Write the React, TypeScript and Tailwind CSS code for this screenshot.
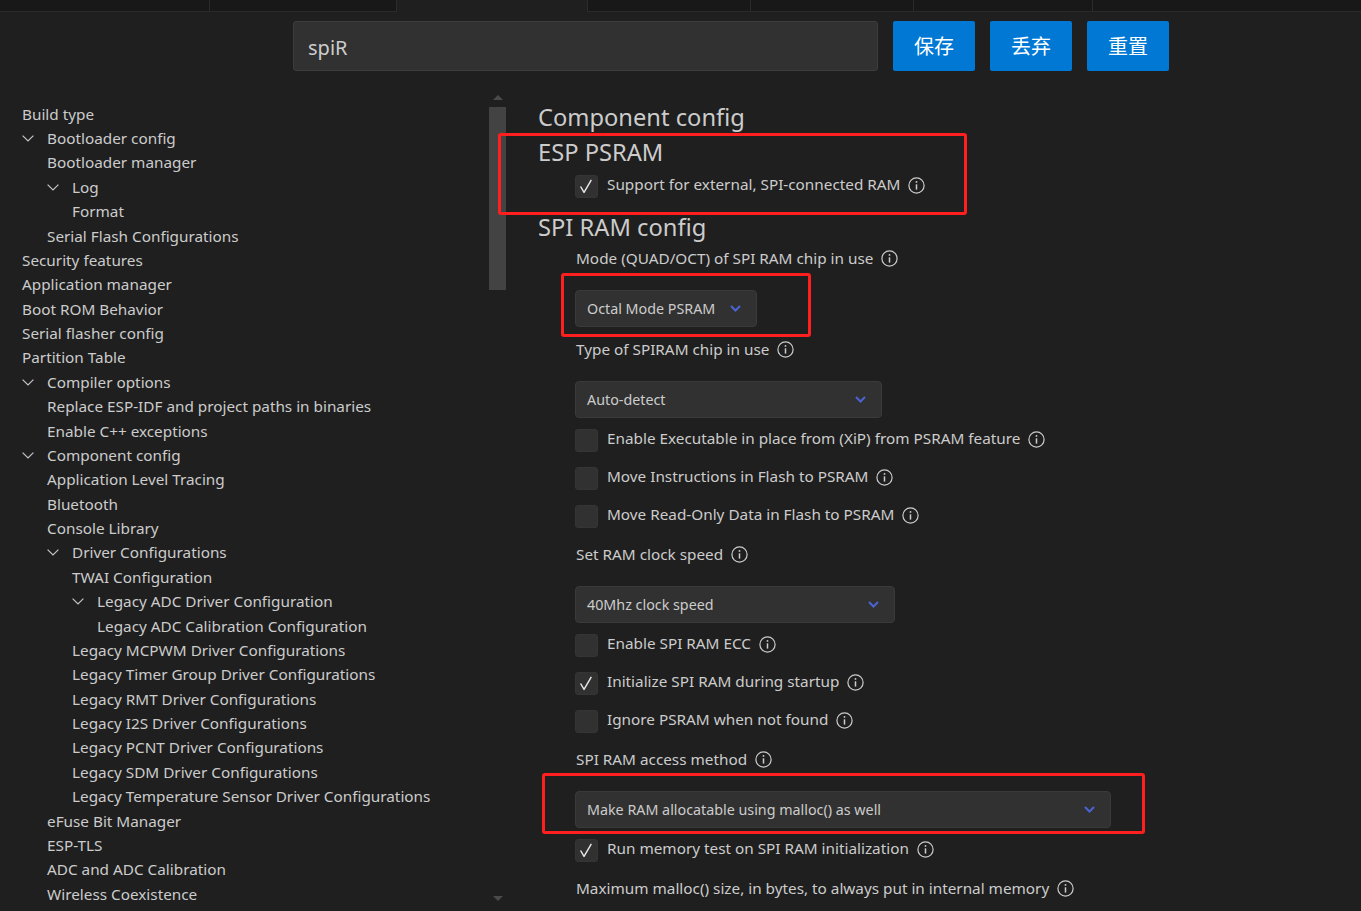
import React from "react";

const FONT = "font-['Noto_Sans','Noto_Sans_CJK_SC',sans-serif]";

type Item = { t: string; pad: number; chev?: boolean };

const tree: Item[] = [
  { t: "Build type", pad: 0 },
  { t: "Bootloader config", pad: 0, chev: true },
  { t: "Bootloader manager", pad: 1 },
  { t: "Log", pad: 1, chev: true },
  { t: "Format", pad: 2 },
  { t: "Serial Flash Configurations", pad: 1 },
  { t: "Security features", pad: 0 },
  { t: "Application manager", pad: 0 },
  { t: "Boot ROM Behavior", pad: 0 },
  { t: "Serial flasher config", pad: 0 },
  { t: "Partition Table", pad: 0 },
  { t: "Compiler options", pad: 0, chev: true },
  { t: "Replace ESP-IDF and project paths in binaries", pad: 1 },
  { t: "Enable C++ exceptions", pad: 1 },
  { t: "Component config", pad: 0, chev: true },
  { t: "Application Level Tracing", pad: 1 },
  { t: "Bluetooth", pad: 1 },
  { t: "Console Library", pad: 1 },
  { t: "Driver Configurations", pad: 1, chev: true },
  { t: "TWAI Configuration", pad: 2 },
  { t: "Legacy ADC Driver Configuration", pad: 2, chev: true },
  { t: "Legacy ADC Calibration Configuration", pad: 3 },
  { t: "Legacy MCPWM Driver Configurations", pad: 2 },
  { t: "Legacy Timer Group Driver Configurations", pad: 2 },
  { t: "Legacy RMT Driver Configurations", pad: 2 },
  { t: "Legacy I2S Driver Configurations", pad: 2 },
  { t: "Legacy PCNT Driver Configurations", pad: 2 },
  { t: "Legacy SDM Driver Configurations", pad: 2 },
  { t: "Legacy Temperature Sensor Driver Configurations", pad: 2 },
  { t: "eFuse Bit Manager", pad: 1 },
  { t: "ESP-TLS", pad: 1 },
  { t: "ADC and ADC Calibration", pad: 1 },
  { t: "Wireless Coexistence", pad: 1 },
];

const padCls = ["pl-[22px]", "pl-[47px]", "pl-[72px]", "pl-[97px]"];

function TreeChevron() {
  return (
    <svg width="12" height="7" viewBox="0 0 12 7" className="block">
      <polyline points="0.6,0.6 6,6 11.4,0.6" fill="none" stroke="#c5c5c5" strokeWidth="1.2" />
    </svg>
  );
}

function InfoIcon() {
  return (
    <svg width="17" height="17" viewBox="0 0 17 17" className="block shrink-0">
      <circle cx="8.5" cy="8.5" r="7.6" fill="none" stroke="#cccccc" strokeWidth="1.2" />
      <line x1="8.5" y1="7.3" x2="8.5" y2="12.6" stroke="#cccccc" strokeWidth="1.5" />
      <circle cx="8.5" cy="4.9" r="0.95" fill="#cccccc" />
    </svg>
  );
}

function Check({ on }: { on?: boolean }) {
  return (
    <div className="w-[23px] h-[23px] rounded-[3px] bg-[#313131] border border-[#353535] shrink-0 flex items-center justify-center">
      {on && (
        <svg width="23" height="23" viewBox="0 0 23 23" className="block">
          <polyline points="5,11.5 8.8,18 16.8,4.2" fill="none" stroke="#e6e6e6" strokeWidth="1.6" strokeLinejoin="round" />
        </svg>
      )}
    </div>
  );
}

function CheckRow({ label, on }: { label: string; on?: boolean }) {
  return (
    <div className="h-[38px] flex items-center pl-[37px]">
      <Check on={on} />
      <span className="ml-[9px] mb-[3px] text-[15.3px] text-[#cccccc] whitespace-nowrap">{label}</span>
      <span className="ml-[8px] mb-[2px]">
        <InfoIcon />
      </span>
    </div>
  );
}

function Label({ label }: { label: string }) {
  return (
    <div className="h-[38px] flex items-center pl-[38px]">
      <span className="text-[15.3px] text-[#cccccc] whitespace-nowrap">{label}</span>
      <span className="ml-[8px]">
        <InfoIcon />
      </span>
    </div>
  );
}

function Select({ value, w }: { value: string; w: string }) {
  return (
    <div className="pl-[37px] mt-[13px] mb-[3px]">
      <div className={`${w} h-[37px] rounded-[4px] bg-[#313131] border border-[#3a3a3a] flex items-center justify-between pl-[11px] pr-[15px]`}>
        <span className="text-[14.3px] text-[#cccccc] whitespace-nowrap">{value}</span>
        <svg width="11" height="7" viewBox="0 0 11 7" className="block">
          <polyline points="1,1 5.5,5.5 10,1" fill="none" stroke="#4b63d4" strokeWidth="2" />
        </svg>
      </div>
    </div>
  );
}

function LabelSelect({ label, value, w }: { label: string; value: string; w: string }) {
  return (
    <div>
      <Label label={label} />
      <Select value={value} w={w} />
    </div>
  );
}

export default function App() {
  const tabs = [
    { w: "w-[209px]", active: false },
    { w: "w-[187px]", active: false },
    { w: "w-[191px]", active: true },
    { w: "w-[163px]", active: false },
    { w: "w-[163px]", active: false },
    { w: "w-[179px]", active: false },
    { w: "flex-1", active: false },
  ];
  return (
    <div className={`relative w-[1361px] h-[911px] overflow-hidden bg-[#1f1f1f] ${FONT}`}>
      {/* tab strip */}
      <div className="flex h-[12px]">
        {tabs.map((t, i) => (
          <div
            key={i}
            className={
              t.active
                ? `${t.w} h-[12px] bg-[#1f1f1f] border-l border-[#2b2b2b]`
                : `${t.w} h-[12px] bg-[#181818] border-b border-[#2b2b2b] ${i > 0 ? "border-l" : ""}`
            }
          />
        ))}
      </div>

      {/* toolbar */}
      <div className="flex items-center pl-[293px] pt-[9px] gap-[15px]">
        <div className="w-[585px] h-[50px] rounded-[3px] bg-[#313131] border border-[#3c3c3c] flex items-center pl-[14px] pt-[3px]">
          <span className="text-[20px] text-[#cccccc]">spiR</span>
        </div>
        {["保存", "丢弃", "重置"].map((b) => (
          <div key={b} className="w-[82px] h-[50px] rounded-[2px] bg-[#0078d4] flex items-center justify-center">
            <span className="text-[20px] text-white font-['Noto_Sans_CJK_SC',sans-serif]">{b}</span>
          </div>
        ))}
      </div>

      {/* main */}
      <div className="flex mt-[19px] h-[821px]">
        {/* sidebar */}
        <div className="w-[489px] pt-[12px]">
          {tree.map((it, i) => (
            <div key={i} className={`h-[24.375px] flex items-center ${padCls[it.pad]}`}>
              {it.chev && (
                <div className="w-[25px] shrink-0">
                  <TreeChevron />
                </div>
              )}
              <span className="text-[15.3px] text-[#cccccc] whitespace-nowrap">{it.t}</span>
            </div>
          ))}
        </div>

        {/* scrollbar */}
        <div className="w-[17px] flex flex-col items-center">
          <div className="mt-[5px] w-0 h-0 border-l-[5px] border-r-[5px] border-b-[5px] border-l-transparent border-r-transparent border-b-[#4a4a4a]" />
          <div className="mt-[7px] w-[17px] h-[183px] bg-[#434343]" />
          <div className="flex-1" />
          <div className="mb-[10px] w-0 h-0 border-l-[5px] border-r-[5px] border-t-[5px] border-l-transparent border-r-transparent border-t-[#4a4a4a]" />
        </div>

        {/* content */}
        <div className="flex-1 pl-[32px] pt-[17px]">
          <div className="h-[22px] flex items-center">
            <span className="text-[23.7px] text-[#cccccc] whitespace-nowrap">Component config</span>
          </div>
          <div className="h-[22px] mt-[13px] flex items-center">
            <span className="text-[23.7px] text-[#cccccc] whitespace-nowrap">ESP PSRAM</span>
          </div>
          <div className="mt-[3px]">
            <CheckRow label="Support for external, SPI-connected RAM" on />
          </div>
          <div className="h-[34px] pt-[12px]">
            <div className="h-[22px] flex items-center">
              <span className="text-[23.7px] text-[#cccccc] whitespace-nowrap">SPI RAM config</span>
            </div>
          </div>
          <LabelSelect label="Mode (QUAD/OCT) of SPI RAM chip in use" value="Octal Mode PSRAM" w="w-[182px]" />
          <LabelSelect label="Type of SPIRAM chip in use" value="Auto-detect" w="w-[307px]" />
          <CheckRow label="Enable Executable in place from (XiP) from PSRAM feature" />
          <CheckRow label="Move Instructions in Flash to PSRAM" />
          <CheckRow label="Move Read-Only Data in Flash to PSRAM" />
          <LabelSelect label="Set RAM clock speed" value="40Mhz clock speed" w="w-[320px]" />
          <CheckRow label="Enable SPI RAM ECC" />
          <CheckRow label="Initialize SPI RAM during startup" on />
          <CheckRow label="Ignore PSRAM when not found" />
          <LabelSelect label="SPI RAM access method" value="Make RAM allocatable using malloc() as well" w="w-[536px]" />
          <CheckRow label="Run memory test on SPI RAM initialization" on />
          <Label label="Maximum malloc() size, in bytes, to always put in internal memory" />
        </div>
      </div>

      {/* red annotation boxes */}
      <div className="absolute left-[498px] top-[133px] w-[469px] h-[82px] border-[3px] border-[#ff1f1f] rounded-[3px]" />
      <div className="absolute left-[561px] top-[273px] w-[250px] h-[64px] border-[3px] border-[#ff1f1f] rounded-[3px]" />
      <div className="absolute left-[542px] top-[773px] w-[603px] h-[61px] border-[3px] border-[#ff1f1f] rounded-[3px]" />
    </div>
  );
}
